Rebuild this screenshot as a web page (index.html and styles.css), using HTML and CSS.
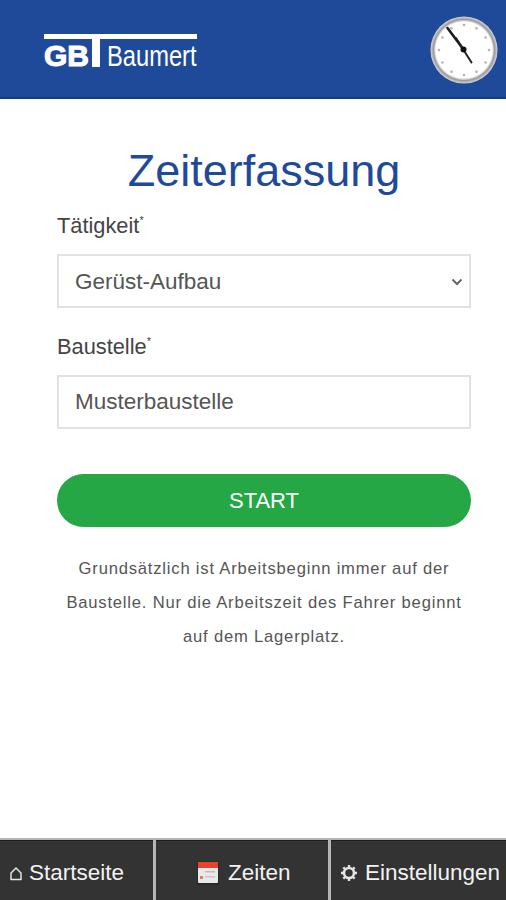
FILE: index.html
```html
<!DOCTYPE html>
<html lang="de">
<head>
<meta charset="utf-8">
<title>Zeiterfassung</title>
<link rel="stylesheet" href="styles.css">
</head>
<body>
<div class="app">
  <header class="header">
    <div class="logo">
      <div class="logo-bar"></div>
      <div class="logo-row">
        <span class="logo-gb">GB</span>
        <span class="logo-stem"></span>
        <span class="logo-name">Baumert</span>
      </div>
    </div>
    <svg class="clock" width="68" height="68" viewBox="0 0 68 68">
      <defs>
        <radialGradient id="rim" cx="50%" cy="50%" r="50%">
          <stop offset="84%" stop-color="#ffffff"/>
          <stop offset="91%" stop-color="#9a9a9a"/>
          <stop offset="100%" stop-color="#d8d8d8"/>
        </radialGradient>
      </defs>
      <circle cx="34" cy="34" r="33.5" fill="url(#rim)"/>
      <g fill="#b4b4b4">
        <circle cx="34" cy="9" r="1.3"/><circle cx="46.500" cy="12.350" r="1.3"/>
        <circle cx="55.650" cy="21.500" r="1.3"/><circle cx="59" cy="34" r="1.3"/>
        <circle cx="55.650" cy="46.500" r="1.3"/><circle cx="46.500" cy="55.650" r="1.3"/>
        <circle cx="34" cy="59" r="1.3"/><circle cx="21.500" cy="55.650" r="1.3"/>
        <circle cx="12.350" cy="46.500" r="1.3"/><circle cx="9" cy="34" r="1.3"/>
        <circle cx="12.350" cy="21.500" r="1.3"/><circle cx="21.500" cy="12.350" r="1.3"/>
      </g>
      <path d="M17.500 12 L33.500 33.500" stroke="#1c1c1c" stroke-width="2.600" stroke-linecap="round"/>
      <path d="M26 22 L41.500 46.500" stroke="#222" stroke-width="2" stroke-linecap="round"/>
      <circle cx="33.500" cy="33.500" r="3" fill="#111"/>
    </svg>
  </header>

  <main class="content">
    <h1 class="title">Zeiterfassung</h1>
    <form class="form">
      <label class="label" for="task">Tätigkeit<sup class="req">*</sup></label>
      <div class="select-wrap">
        <select class="field select" id="task">
          <option>Gerüst-Aufbau</option>
        </select>
        <svg class="chevron" width="12" height="8" viewBox="0 0 12 8"><path d="M1.500 1.500 L6 6 L10.500 1.500" fill="none" stroke="#666" stroke-width="2"/></svg>
      </div>
      <label class="label label-second" for="site">Baustelle<sup class="req">*</sup></label>
      <input class="field site" id="site" type="text" value="Musterbaustelle">
      <button class="start" type="button">START</button>
    </form>
    <p class="note">Grundsätzlich ist Arbeitsbeginn immer auf der Baustelle. Nur die Arbeitszeit des Fahrer beginnt auf dem Lagerplatz.</p>
  </main>

  <nav class="tabs">
    <a class="tab tab-home">
      <svg class="tab-icon" width="12" height="15" viewBox="0 0 12 15"><path d="M1 7 L6 2 L11 7 V13.500 H1 Z" fill="none" stroke="#e4e4e4" stroke-width="1.500"/></svg>
      Startseite</a>
    <a class="tab tab-times">
      <svg class="tab-icon" width="22" height="24" viewBox="0 0 22 24">
        <rect x="0" y="0" width="22" height="24" rx="2" fill="#2a2a2a"/>
        <rect x="1" y="1" width="20" height="21" rx="1" fill="#e9e9e9"/>
        <rect x="1" y="1" width="20" height="6" fill="#e8432e"/>
        <rect x="3" y="15" width="3" height="3" fill="#e57a5f"/>
        <rect x="8" y="10" width="10" height="1.500" fill="#bbb"/>
        <rect x="8" y="15" width="10" height="1.500" fill="#c8c8c8"/>
      </svg>
      Zeiten</a>
    <a class="tab tab-settings">
      <svg class="tab-icon" width="18" height="18" viewBox="0 0 18 18">
        <circle cx="9" cy="9" r="5" fill="none" stroke="#e4e4e4" stroke-width="2.600"/>
        <path d="M9 1 V3.500 M9 14.500 V17 M1 9 H3.500 M14.500 9 H17 M3.300 3.300 L5 5 M13 13 L14.700 14.700 M3.300 14.700 L5 13 M13 5 L14.700 3.300" stroke="#e4e4e4" stroke-width="2.400"/>
      </svg>
      Einstellungen</a>
  </nav>
</div>
</body>
</html>
```

FILE: styles.css
```css
* { box-sizing: border-box; }
html, body { margin: 0; padding: 0; height: 100%; }
body { font-family: "Liberation Sans", Arial, sans-serif; background: #fff; color: #444; }
.app { height: 900px; display: flex; flex-direction: column; }

.header {
  height: 99px;
  flex: none;
  background: #1f4a9a;
  border-bottom: 2px solid #123a8a;
  display: flex;
  justify-content: space-between;
  align-items: flex-start;
  padding: 16px 8px 0 44px;
}
.logo { width: 153px; margin-top: 18px; color: #fff; }
.logo-bar { height: 5px; background: #fff; }
.logo-row { display: flex; align-items: flex-start; height: 28px; }
.logo-gb { flex: none; font: 700 30px/30px "Liberation Sans", sans-serif; -webkit-text-stroke: 1.1px #fff; margin-top: 2px; width: 48px; }
.logo-stem { flex: none; width: 8px; height: 28px; background: #fff; margin-right: 7px; }
.logo-name { flex: none; width: 90px; font: 400 30px/30px "Liberation Sans", sans-serif; margin-top: 2px; white-space: nowrap; transform: scaleX(0.79); transform-origin: left top; }
.clock { display: block; }

.content { flex: 1; padding: 47px 35px 0 57px; }
.title {
  margin: 0 -22px;
  font-size: 45px;
  line-height: 50px;
  font-weight: 400;
  color: #1f4a9a;
  text-align: center;
}
.form { display: flex; flex-direction: column; }
.label { font-size: 21.8px; line-height: 24px; color: #444; margin-top: 18px; }
.label-second { margin-top: 27px; }
.req { font-size: 11px; line-height: 0; vertical-align: 9px; }
.select-wrap { position: relative; margin-top: 16px; }
.field {
  display: block;
  width: 100%;
  height: 54px;
  border: 2px solid #e2e2e2;
  background: #fff;
  padding: 0 16px;
  font: 400 22.5px "Liberation Sans", sans-serif;
  color: #555;
  border-radius: 0;
  outline: none;
}
.site { margin-top: 16px; }
.select { appearance: none; -webkit-appearance: none; }
.chevron { position: absolute; top: 24px; right: 8px; pointer-events: none; }
.start {
  margin-top: 45px;
  height: 53px;
  border: 0;
  border-radius: 27px;
  background: #25a745;
  color: #fff;
  font: 400 22px "Liberation Sans", sans-serif;
}
.note {
  margin: 25px 0 0;
  font-size: 16.6px;
  line-height: 34px;
  letter-spacing: 0.8px;
  text-align: center;
  color: #555;
}

.tabs {
  flex: none;
  height: 62px;
  display: grid;
  grid-template-columns: 153px 172px 175px;
  column-gap: 3px;
  background: #b5b5b5;
  border-top: 2px solid #b5b5b5;
}
.tab {
  background: #333;
  border-top: 1px solid #1c1c1c;
  padding-top: 5px;
  color: #f2f2f2;
  font-size: 22.5px;
  display: flex;
  align-items: center;
  white-space: nowrap;
}
.tab-home { padding-left: 10px; gap: 7px; }
.tab-times { padding-left: 41px; gap: 9px; }
.tab-settings { padding-left: 9px; gap: 7px; }
.tab-icon { flex: none; }
```
